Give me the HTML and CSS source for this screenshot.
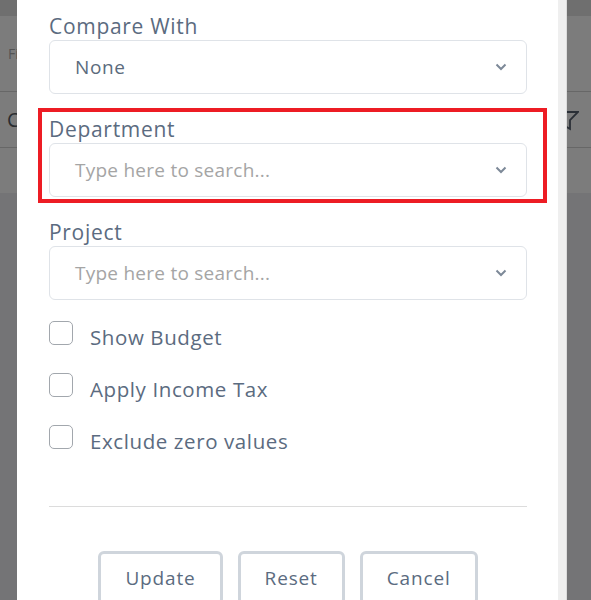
FILE: index.html
```html
<!DOCTYPE html>
<html lang="en">

<head>
    <meta charset="UTF-8">
    <meta name="viewport" content="width=device-width, initial-scale=1.0">
    <title>Report Filters</title>
    <link rel="stylesheet" href="styles.css">
</head>

<body>
    <!-- page behind the dialog -->
    <div class="page">
        <div class="page-top"></div>
        <div class="page-head"><span>Filter</span></div>
        <div class="page-row">
            <span class="row-title">Code</span>
            <svg class="funnel" width="24" height="24" viewBox="0 0 24 24">
                <path d="M1 4 H23 L15 12 V21 L10 18 V12 Z" fill="none" stroke="#545e6c" stroke-width="1.8"
                    stroke-linejoin="miter" />
            </svg>
        </div>
        <div class="page-row short"></div>
    </div>

    <div class="overlay"></div>

    <div class="modal">
        <div class="modal-body">
            <div class="field">
                <label>Compare With</label>
                <div class="select">
                    <span>None</span>
                    <svg class="chevron" width="12" height="8" viewBox="0 0 12 8">
                        <path d="M1.5 1.5 L6 6 L10.5 1.5" fill="none" stroke="#7d8998" stroke-width="2" />
                    </svg>
                </div>
            </div>

            <div class="field">
                <div class="mark"></div>
                <label>Department</label>
                <div class="select">
                    <span class="placeholder">Type here to search...</span>
                    <svg class="chevron" width="12" height="8" viewBox="0 0 12 8">
                        <path d="M1.5 1.5 L6 6 L10.5 1.5" fill="none" stroke="#7d8998" stroke-width="2" />
                    </svg>
                </div>
            </div>

            <div class="field">
                <label>Project</label>
                <div class="select">
                    <span class="placeholder">Type here to search...</span>
                    <svg class="chevron" width="12" height="8" viewBox="0 0 12 8">
                        <path d="M1.5 1.5 L6 6 L10.5 1.5" fill="none" stroke="#7d8998" stroke-width="2" />
                    </svg>
                </div>
            </div>

            <div class="checks">
                <label class="check"><input type="checkbox" class="box"><span>Show Budget</span></label>
                <label class="check"><input type="checkbox" class="box"><span>Apply Income Tax</span></label>
                <label class="check"><input type="checkbox" class="box"><span>Exclude zero values</span></label>
            </div>

            <div class="divider"></div>

            <div class="actions">
                <button type="button" class="btn">Update</button>
                <button type="button" class="btn">Reset</button>
                <button type="button" class="btn">Cancel</button>
            </div>
        </div>
        <div class="scrollbar"></div>
    </div>
</body>

</html>
```

FILE: styles.css
```css
body {
    margin: 0;
    height: 600px;
    overflow: hidden;
    font-family: "Open Sans", sans-serif;
    background-color: #e8e9ec;
}

/* page behind */
.page-top {
    height: 16px;
    background-color: #dedede;
}

.page-head {
    height: 75px;
    padding-left: 8px;
    display: flex;
    align-items: center;
    background-color: #f8f8f8;
    border-bottom: 1px solid #cfcfcf;
    font-size: 14px;
    color: #a8a8a8;
}

.page-row {
    height: 55px;
    padding: 0 12px 0 7px;
    display: flex;
    align-items: center;
    justify-content: space-between;
    background-color: #f8f8f8;
    border-bottom: 1px solid #cfcfcf;
    font-size: 20px;
    color: #555b63;
}

.page-row.short {
    height: 45px;
    border-bottom: none;
}

.overlay {
    position: fixed;
    top: 0;
    left: 0;
    right: 0;
    bottom: 0;
    background-color: rgba(0, 0, 0, 0.5);
}

/* dialog */
.modal {
    position: absolute;
    top: 0;
    left: 17px;
    width: 550px;
    height: 600px;
    overflow: hidden;
    display: flex;
    background-color: #fff;
}

.modal-body {
    flex: 1;
    padding: 12px 31px 0 32px;
}

.scrollbar {
    width: 8px;
    background-color: #efefef;
    border-right: 1px solid #dcdcdc;
}

.field {
    position: relative;
    margin-bottom: 21px;
}

.field label {
    display: block;
    font-size: 21px;
    line-height: 28px;
    color: #5b6b80;
    letter-spacing: 0.7px;
}

.select {
    height: 54px;
    box-sizing: border-box;
    padding: 0 19px 0 25px;
    display: flex;
    align-items: center;
    justify-content: space-between;
    border: 1px solid #dfe3e8;
    border-radius: 6px;
    font-size: 19px;
    color: #5b6b7d;
    letter-spacing: 0.6px;
}

.placeholder {
    color: #a5a5a5;
    letter-spacing: 0.25px;
}

.mark {
    position: absolute;
    top: -7px;
    left: -11px;
    right: -20px;
    bottom: -6px;
    border: 4px solid #ed1c24;
}

.checks {
    display: flex;
    flex-direction: column;
    gap: 20px;
}

.check {
    display: flex;
    align-items: flex-start;
    height: 32px;
    font-size: 20.5px;
    line-height: 32px;
    color: #5b6b80;
    letter-spacing: 0.6px;
}

.box {
    appearance: none;
    width: 24px;
    height: 24px;
    margin: 0 17px 0 0;
    box-sizing: border-box;
    border: 1.5px solid #a2a7ad;
    border-radius: 5px;
    background-color: #fff;
}

.divider {
    margin-top: 49px;
    border-top: 1px solid #dcdcdc;
}

.actions {
    display: flex;
    justify-content: center;
    gap: 15px;
    margin-top: 44px;
}

.btn {
    height: 54px;
    padding: 0 24px;
    border: 3px solid #cfd5dc;
    border-radius: 6px;
    background-color: #fff;
    font-family: inherit;
    font-size: 19px;
    color: #5b6b80;
    letter-spacing: 0.85px;
}
```
